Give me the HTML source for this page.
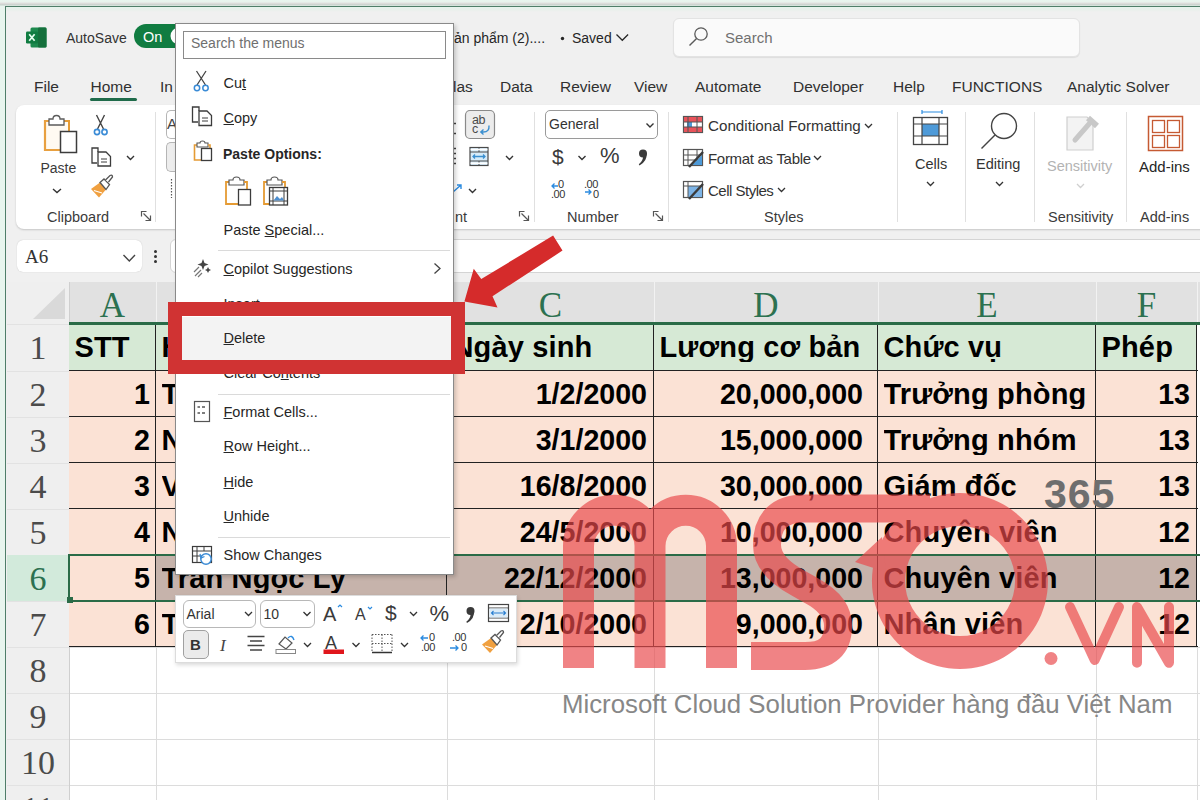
<!DOCTYPE html><html><head><meta charset="utf-8"><style>
*{margin:0;padding:0;box-sizing:border-box}
html,body{width:1200px;height:800px;overflow:hidden;background:#f0f0f0;font-family:"Liberation Sans",sans-serif;color:#242424}
.a{position:absolute;white-space:nowrap;line-height:1}
.t{font-size:15px;color:#262626}
.cell{position:absolute;font-weight:bold;font-size:28.6px;color:#000;line-height:1;white-space:nowrap}
.hdr{position:absolute;font-family:"Liberation Serif",serif;font-size:35px;line-height:1;color:#2c7150;text-align:center}
.rn{position:absolute;font-family:"Liberation Serif",serif;font-size:34px;line-height:1;color:#4b4b4b;text-align:center}
svg{position:absolute;overflow:visible}
</style></head><body>
<div class="a" style="left:0px;top:0px;width:1200px;height:800px;background:linear-gradient(#e8f5ee 0px,#e8f2ec 2px,#dcdcda 3.5px,#c5d0ca 5px,#e8f5ee 6px)"></div>
<div class="a" style="left:5px;top:6px;width:1195px;height:794px;background:linear-gradient(#e6f3ec 0px,#eaf0ec 3px,#f0f0f0 5px);border-left:1.5px solid #4f7e69;border-top:1.5px solid #4f7e69"></div>
<svg style="left:26px;top:27px" width="21" height="21" viewBox="0 0 21 21">
<rect x="4.5" y="0.5" width="16" height="20" rx="1.5" fill="#1d8a4e"/>
<rect x="12" y="0.5" width="8.5" height="20" rx="1.2" fill="#15703c"/>
<rect x="0" y="4.5" width="12" height="12" rx="1.2" fill="#107c41"/>
<path d="M3.2 7.2 L8.6 13.8 M8.6 7.2 L3.2 13.8" stroke="#e8fff0" stroke-width="1.7"/>
</svg>
<div class="a" style="left:66px;top:31px;font-size:14px;color:#333">AutoSave</div>
<div class="a" style="left:134px;top:24px;width:66px;height:24px;background:#107c41;border-radius:12px"></div>
<div class="a" style="left:143px;top:30px;font-size:14.5px;color:#fff">On</div>
<svg style="left:0;top:0" width="1" height="1"><circle cx="179" cy="36" r="8.5" fill="#fff"/></svg>
<div class="a" style="left:454px;top:31px;font-size:14px;color:#262626">ản phẩm (2)....</div>
<svg style="left:0;top:0" width="1" height="1"><circle cx="562.5" cy="38.5" r="1.7" fill="#262626"/><path d="M616.5 34.5 L622.3 40.3 L628.1 34.5" fill="none" stroke="#262626" stroke-width="1.3"/></svg>
<div class="a" style="left:572px;top:31px;font-size:14px;color:#262626">Saved</div>
<div class="a" style="left:673px;top:18px;width:407px;height:39px;background:#fafafa;border:1px solid #e3e3e3;border-radius:6px;box-shadow:0 1px 1px rgba(0,0,0,0.08)"></div>
<svg style="left:0;top:0" width="1" height="1"><circle cx="701" cy="34" r="6.2" fill="none" stroke="#5a5a5a" stroke-width="1.3"/><path d="M696.6 38.4 L689.5 45.5" stroke="#5a5a5a" stroke-width="1.4"/></svg>
<div class="a" style="left:725px;top:30px;font-size:15px;color:#707070">Search</div>
<div class="a" style="left:34px;top:79px;font-size:15.5px;color:#303030">File</div>
<div class="a" style="left:90.5px;top:79px;font-size:15.5px;color:#303030">Home</div>
<div class="a" style="left:160px;top:79px;font-size:15.5px;color:#303030">In</div>
<div class="a" style="left:453px;top:79px;font-size:15.5px;color:#303030">las</div>
<div class="a" style="left:500px;top:79px;font-size:15.5px;color:#303030">Data</div>
<div class="a" style="left:560px;top:79px;font-size:15.5px;color:#303030">Review</div>
<div class="a" style="left:634px;top:79px;font-size:15.5px;color:#303030">View</div>
<div class="a" style="left:695px;top:79px;font-size:15.5px;color:#303030">Automate</div>
<div class="a" style="left:793px;top:79px;font-size:15.5px;color:#303030">Developer</div>
<div class="a" style="left:893px;top:79px;font-size:15.5px;color:#303030">Help</div>
<div class="a" style="left:952px;top:79px;font-size:15.5px;color:#303030">FUNCTIONS</div>
<div class="a" style="left:1067px;top:79px;font-size:15.5px;color:#303030">Analytic Solver</div>
<div class="a" style="left:89.5px;top:98.3px;width:47.5px;height:2.6px;background:#1f6b4a;border-radius:2px"></div>
<div class="a" style="left:16px;top:105px;width:1200px;height:124px;background:#fff;border-radius:8px;box-shadow:0 1px 2px rgba(0,0,0,0.18)"></div>
<svg style="left:0;top:0" width="1" height="1">
<path d="M46 121 H68 V131 H60 V150 H46 Z" fill="#fffaf2"/><path d="M49 121 H45 V150 H60" fill="none" stroke="#e8a040" stroke-width="2.2"/>
<path d="M64 121 H69 V131" fill="none" stroke="#e59b34" stroke-width="2"/>
<path d="M49 125 V119 H53 Q53 115.5 56.5 115.5 Q60 115.5 60 119 H64 V125 Z" fill="#fff" stroke="#5b5b5b" stroke-width="1.3"/>
<rect x="60.5" y="131.5" width="16" height="21" fill="#fff" stroke="#3c3c3c" stroke-width="1.5"/>
<path d="M53 189 L57 192.5 L61 189" fill="none" stroke="#333" stroke-width="1.4"/>
<path d="M96.5 115 L103.5 129 M104.5 115 L97.5 129" stroke="#444" stroke-width="1.4"/>
<circle cx="97" cy="132" r="2.6" fill="none" stroke="#3a8bd6" stroke-width="1.6"/>
<circle cx="104.5" cy="132" r="2.6" fill="none" stroke="#3a8bd6" stroke-width="1.6"/>
<path d="M98 152 V148 H92 V163 H97" fill="none" stroke="#3c3c3c" stroke-width="1.3"/>
<path d="M98 152 H106 L110.5 156.5 V166 H98 Z" fill="#fff" stroke="#3c3c3c" stroke-width="1.3"/>
<path d="M101 159 H107 M101 162 H107" stroke="#3c3c3c" stroke-width="1"/>
<path d="M127 156 L130.5 159.5 L134 156" fill="none" stroke="#333" stroke-width="1.4"/>
<path d="M91.0 189.0 L100.0 182.5 L106.0 189.5 L99.0 197.5 Z" fill="#f0a040"/><path d="M94.0 190.5 L102.0 193.0" stroke="#fff" stroke-width="1.2"/><path d="M100.0 182.5 L104.0 179.0 L109.5 184.5 L106.0 189.5 Z" fill="#fff" stroke="#555" stroke-width="1.3"/><path d="M105.5 180.0 L110.0 175.5 Q112.5 174.5 112.5 177.0 L108.5 182.0" fill="#fff" stroke="#555" stroke-width="1.3"/>
<path d="M146.5 211.5 H141.5 V216.5 M143.5 213.5 L150.5 220.5 M145.5 220.5 H150.5 V215.5" fill="none" stroke="#555" stroke-width="1.2"/>
</svg>
<div class="a" style="left:40.5px;top:161px;font-size:14.5px;color:#3a3a3a;font-size:14px">Paste</div>
<div class="a" style="left:47px;top:210px;font-size:14.5px;color:#3a3a3a">Clipboard</div>
<div class="a" style="left:155px;top:112px;width:1px;height:110px;background:#e0e0e0"></div>
<div class="a" style="left:166px;top:110px;width:14px;height:29px;border:1px solid #b5b5b5;border-right:none;border-radius:5px 0 0 5px;background:#fff"></div>
<div class="a" style="left:166px;top:142px;width:14px;height:30px;border:1px solid #b5b5b5;border-right:none;border-radius:5px 0 0 5px;background:#ededed"></div>
<div class="a" style="left:167px;top:116px;font-size:15px;color:#444">A</div>
<svg style="left:0;top:0" width="1" height="1"><path d="M171.5 179 V198" stroke="#555" stroke-width="1.2" stroke-dasharray="1.5 1.5"/></svg>
<svg style="left:0;top:0" width="1" height="1">
<path d="M453 123.5 H456 M453 133.5 H456 M453 148.5 H456 M453 153.5 H456 M453 158.5 H456 M453 163.5 H456" stroke="#444" stroke-width="1.3"/>
<rect x="465.5" y="110.5" width="29" height="28" rx="4.5" fill="#ececec" stroke="#8a8a8a" stroke-width="1.2"/>
<rect x="470" y="147.5" width="18" height="18" fill="#d6ecfa" stroke="#4a4a4a" stroke-width="1.2"/>
<path d="M470 152 H488 M470 161 H488 M479 147.5 V152 M479 161 V165.5" stroke="#4a4a4a" stroke-width="1"/>
<path d="M470.6 149.5 H487.4 M470.6 163.3 H487.4" stroke="#fff" stroke-width="1.5"/>
<path d="M473 156.5 H485 M475 154.5 L473 156.5 L475 158.5 M483 154.5 L485 156.5 L483 158.5" fill="none" stroke="#3a8fd0" stroke-width="1.3"/>
<path d="M506 156 L509.5 159.5 L513 156" fill="none" stroke="#333" stroke-width="1.4"/>
<path d="M453 192 L461 185 M457 185 H461 V189" fill="none" stroke="#2b8be0" stroke-width="1.4"/>
<path d="M469 189 L472.5 192.5 L476 189" fill="none" stroke="#333" stroke-width="1.4"/>
<path d="M524.5 211.5 H519.5 V216.5 M521.5 213.5 L528.5 220.5 M523.5 220.5 H528.5 V215.5" fill="none" stroke="#555" stroke-width="1.2"/>
</svg>
<div class="a" style="left:472px;top:114px;font-size:12.5px;color:#4a4a4a;letter-spacing:-0.5px">ab</div>
<div class="a" style="left:472px;top:122.5px;font-size:12.5px;color:#4a4a4a">c</div>
<svg style="left:0;top:0" width="1" height="1"><path d="M489 125.5 Q489.5 132 483.5 132 H481 M483.5 129.5 L480.8 132 L483.5 134.5" fill="none" stroke="#3a8fd0" stroke-width="1.4"/></svg>
<div class="a" style="left:455px;top:210px;font-size:14.5px;color:#3a3a3a">nt</div>
<div class="a" style="left:534px;top:112px;width:1px;height:110px;background:#e0e0e0"></div>
<div class="a" style="left:545px;top:110px;width:113px;height:29px;background:#fff;border:1px solid #9a9a9a;border-radius:5px"></div>
<div class="a" style="left:549px;top:117px;font-size:14px;color:#333">General</div>
<svg style="left:0;top:0" width="1" height="1">
<path d="M646.5 123.5 L650 127 L653.5 123.5" fill="none" stroke="#333" stroke-width="1.4"/>
<path d="M578.5 156 L582 159.5 L585.5 156" fill="none" stroke="#333" stroke-width="1.4"/>
<path d="M658.5 211.5 H653.5 V216.5 M655.5 213.5 L662.5 220.5 M657.5 220.5 H662.5 V215.5" fill="none" stroke="#555" stroke-width="1.2"/>
<path d="M558 186 H552 M554.5 183.5 L552 186 L554.5 188.5" fill="none" stroke="#2b8be0" stroke-width="1.3"/>
<path d="M585 192 H591 M588.5 189.5 L591 192 L588.5 194.5" fill="none" stroke="#2b8be0" stroke-width="1.3"/>
</svg>
<div class="a" style="left:552px;top:146px;font-size:21px;color:#3a3a3a">$</div>
<div class="a" style="left:600px;top:145px;font-size:22px;color:#3a3a3a">%</div>
<svg style="left:0;top:0" width="1" height="1"><circle cx="643" cy="153.5" r="4" fill="#3a3a3a"/><path d="M646.5 153 Q647.5 161 639.5 165.5 L638.8 164.3 Q643.5 160.5 643 156 Z" fill="#3a3a3a"/></svg>
<div class="a" style="left:558px;top:179px;font-size:11px;color:#333">0</div>
<div class="a" style="left:551px;top:189px;font-size:11px;color:#333;letter-spacing:-0.5px">.00</div>
<div class="a" style="left:584px;top:179px;font-size:11px;color:#333;letter-spacing:-0.5px">.00</div>
<div class="a" style="left:593px;top:189px;font-size:11px;color:#333">0</div>
<div class="a" style="left:567px;top:210px;font-size:14.5px;color:#3a3a3a">Number</div>
<div class="a" style="left:668px;top:112px;width:1px;height:110px;background:#e0e0e0"></div>
<svg style="left:0;top:0" width="1" height="1">
<rect x="683.5" y="116.5" width="19" height="16" fill="#fff" stroke="#555" stroke-width="1.2"/>
<rect x="684" y="117" width="18" height="5" fill="#e8535a"/>
<rect x="684" y="127" width="18" height="5" fill="#e8535a"/>
<rect x="687" y="122" width="5" height="5" fill="#4e9ad8"/>
<path d="M683.5 122 H702.5 M683.5 127 H702.5 M688 116.5 V132.5 M697 116.5 V132.5" stroke="#555" stroke-width="1"/>
<path d="M865 124 L868.5 127.5 L872 124" fill="none" stroke="#333" stroke-width="1.3"/>
<rect x="683.5" y="149.5" width="19" height="16" fill="#fff" stroke="#555" stroke-width="1.2"/>
<path d="M683.5 155 H702.5 M683.5 160 H702.5 M688 149.5 V165.5 M697 149.5 V165.5" stroke="#555" stroke-width="1"/>
<path d="M692 165 L702 155 V165 Z" fill="#4e9ad8"/>
<path d="M689 167 L703 152" stroke="#3a3a3a" stroke-width="2.5"/>
<path d="M814 156 L817.5 159.5 L821 156" fill="none" stroke="#333" stroke-width="1.3"/>
<rect x="683.5" y="181.5" width="19" height="16" fill="#fff" stroke="#555" stroke-width="1.2"/>
<rect x="688" y="186" width="14" height="11" fill="#7db4e6"/>
<path d="M683.5 186 H702.5 M688 181.5 V197.5" stroke="#555" stroke-width="1"/>
<path d="M689 199 L703 184" stroke="#3a3a3a" stroke-width="2.5"/>
<path d="M778 188 L781.5 191.5 L785 188" fill="none" stroke="#333" stroke-width="1.3"/>
</svg>
<div class="a" style="left:708px;top:117.5px;font-size:15.2px;color:#333">Conditional Formatting</div>
<div class="a" style="left:708px;top:150.5px;font-size:15px;color:#333;letter-spacing:-0.3px">Format as Table</div>
<div class="a" style="left:708px;top:182.5px;font-size:15px;color:#333;letter-spacing:-0.5px">Cell Styles</div>
<div class="a" style="left:764px;top:210px;font-size:14.5px;color:#3a3a3a">Styles</div>
<div class="a" style="left:897px;top:112px;width:1px;height:110px;background:#e0e0e0"></div>
<svg style="left:0;top:0" width="1" height="1">
<path d="M922 112 H942 M922 110 V114 M942 110 V114" stroke="#2b8be0" stroke-width="1.2"/>
<rect x="913.5" y="117.5" width="34" height="27" fill="#fff" stroke="#444" stroke-width="1.3"/>
<rect x="922" y="124" width="17" height="12" fill="#4e9ad8"/>
<path d="M913.5 124 H947.5 M913.5 136 H947.5 M922 117.5 V144.5 M939 117.5 V144.5" stroke="#444" stroke-width="1.2"/>
<path d="M927 182 L930.5 185.5 L934 182" fill="none" stroke="#333" stroke-width="1.3"/>
</svg>
<div class="a" style="left:915px;top:157px;font-size:14.5px;color:#333">Cells</div>
<div class="a" style="left:965px;top:112px;width:1px;height:110px;background:#e0e0e0"></div>
<svg style="left:0;top:0" width="1" height="1">
<circle cx="1004" cy="126" r="12.5" fill="#fff" stroke="#444" stroke-width="1.4"/>
<path d="M995 135 L981.5 148.5" stroke="#444" stroke-width="1.5"/>
<path d="M996 182 L999.5 185.5 L1003 182" fill="none" stroke="#333" stroke-width="1.3"/>
</svg>
<div class="a" style="left:976px;top:157px;font-size:14.5px;color:#333">Editing</div>
<div class="a" style="left:1034px;top:112px;width:1px;height:110px;background:#e0e0e0"></div>
<svg style="left:0;top:0" width="1" height="1">
<path d="M1067 117 H1087 L1093 123 V150 H1067 Z" fill="#f3f3f3" stroke="#cfcfcf" stroke-width="1.2"/>
<path d="M1075 140 L1089 124" stroke="#c8c8c8" stroke-width="5" stroke-linecap="round"/>
<path d="M1088 118 L1097 126" stroke="#c8c8c8" stroke-width="6"/>
<path d="M1077 184 L1080.5 187.5 L1084 184" fill="none" stroke="#cfcfcf" stroke-width="1.3"/>
</svg>
<div class="a" style="left:1047px;top:159px;font-size:14.5px;color:#b3b3b3">Sensitivity</div>
<div class="a" style="left:1048px;top:210px;font-size:14.5px;color:#3a3a3a">Sensitivity</div>
<div class="a" style="left:1126px;top:112px;width:1px;height:110px;background:#e0e0e0"></div>
<svg style="left:0;top:0" width="1" height="1">
<rect x="1148.5" y="116.5" width="34" height="34" fill="#fff" stroke="#c55a33" stroke-width="1.5"/>
<rect x="1152.5" y="120.5" width="12" height="12" fill="none" stroke="#c55a33" stroke-width="1.3"/>
<rect x="1167.5" y="120.5" width="12" height="12" fill="none" stroke="#c55a33" stroke-width="1.3"/>
<rect x="1152.5" y="135.5" width="12" height="12" fill="none" stroke="#c55a33" stroke-width="1.3"/>
<rect x="1167.5" y="135.5" width="12" height="12" fill="none" stroke="#c55a33" stroke-width="1.3"/>
</svg>
<div class="a" style="left:1139px;top:159px;font-size:15px;color:#262626">Add-ins</div>
<div class="a" style="left:1140px;top:210px;font-size:14.5px;color:#3a3a3a">Add-ins</div>
<div class="a" style="left:17px;top:240px;width:125px;height:32px;background:#fff;border-radius:6px;box-shadow:0 0 1px rgba(0,0,0,0.25)"></div>
<div class="a" style="left:25px;top:247px;font-family:'Liberation Serif',serif;font-size:19px;color:#333">A6</div>
<svg style="left:0;top:0" width="1" height="1"><path d="M123.5 255 L129.3 261 L135 255" fill="none" stroke="#444" stroke-width="1.4"/><circle cx="155.5" cy="251.5" r="1.5" fill="#333"/><circle cx="155.5" cy="256.5" r="1.5" fill="#333"/><circle cx="155.5" cy="261.5" r="1.5" fill="#333"/></svg>
<div class="a" style="left:170px;top:239px;width:1040px;height:34px;background:#fff;border:1px solid #d4d4d4;border-radius:6px 0 0 6px"></div>
<div class="a" style="left:7px;top:282px;width:1193px;height:518px;background:#ffffff"></div>
<div class="a" style="left:7px;top:282px;width:62px;height:518px;background:#efefef"></div>
<div class="a" style="left:69px;top:282px;width:1131px;height:42px;background:#e1e1e1"></div>
<div class="a" style="left:7px;top:282px;width:62px;height:42px;background:#efefef"></div>
<svg style="left:0;top:0" width="1200" height="800"><polygon points="65,288 65,319 33,319" fill="#d9d9d9"/></svg>
<div class="a" style="left:156px;top:282px;width:1px;height:42px;background:#f2f2f2"></div>
<div class="a" style="left:447px;top:282px;width:1px;height:42px;background:#f2f2f2"></div>
<div class="a" style="left:654px;top:282px;width:1px;height:42px;background:#f2f2f2"></div>
<div class="a" style="left:878px;top:282px;width:1px;height:42px;background:#f2f2f2"></div>
<div class="a" style="left:1096px;top:282px;width:1px;height:42px;background:#f2f2f2"></div>
<div class="a" style="left:1197px;top:282px;width:1px;height:42px;background:#f2f2f2"></div>
<div class="a" style="left:69px;top:647px;width:1131px;height:1px;background:#dcdcdc"></div>
<div class="a" style="left:69px;top:693px;width:1131px;height:1px;background:#dcdcdc"></div>
<div class="a" style="left:69px;top:739px;width:1131px;height:1px;background:#dcdcdc"></div>
<div class="a" style="left:69px;top:785px;width:1131px;height:1px;background:#dcdcdc"></div>
<div class="a" style="left:156px;top:647px;width:1px;height:153px;background:#dcdcdc"></div>
<div class="a" style="left:447px;top:647px;width:1px;height:153px;background:#dcdcdc"></div>
<div class="a" style="left:654px;top:647px;width:1px;height:153px;background:#dcdcdc"></div>
<div class="a" style="left:878px;top:647px;width:1px;height:153px;background:#dcdcdc"></div>
<div class="a" style="left:1096px;top:647px;width:1px;height:153px;background:#dcdcdc"></div>
<div class="a" style="left:1197px;top:647px;width:1px;height:153px;background:#dcdcdc"></div>
<div class="a" style="left:7px;top:324px;width:62px;height:1px;background:#e2e2e2"></div>
<div class="a" style="left:7px;top:371px;width:62px;height:1px;background:#e2e2e2"></div>
<div class="a" style="left:7px;top:417px;width:62px;height:1px;background:#e2e2e2"></div>
<div class="a" style="left:7px;top:463px;width:62px;height:1px;background:#e2e2e2"></div>
<div class="a" style="left:7px;top:509px;width:62px;height:1px;background:#e2e2e2"></div>
<div class="a" style="left:7px;top:555px;width:62px;height:1px;background:#e2e2e2"></div>
<div class="a" style="left:7px;top:601px;width:62px;height:1px;background:#e2e2e2"></div>
<div class="a" style="left:7px;top:647px;width:62px;height:1px;background:#e2e2e2"></div>
<div class="a" style="left:7px;top:693px;width:62px;height:1px;background:#e2e2e2"></div>
<div class="a" style="left:7px;top:739px;width:62px;height:1px;background:#e2e2e2"></div>
<div class="a" style="left:7px;top:785px;width:62px;height:1px;background:#e2e2e2"></div>
<div class="a" style="left:68.5px;top:282px;width:1px;height:518px;background:#cfcfcf"></div>
<div class="a" style="left:7px;top:555px;width:62px;height:46px;background:#d2eadb"></div>
<div class="a" style="left:69px;top:324px;width:1128px;height:47px;background:#d6e9d5"></div>
<div class="a" style="left:69px;top:371px;width:1128px;height:276px;background:#fbe2d5"></div>
<div class="a" style="left:156px;top:555px;width:1041px;height:46px;background:#c6b3ab"></div>
<div class="a" style="left:69px;top:370px;width:1129px;height:1.3px;background:#222"></div>
<div class="a" style="left:69px;top:416px;width:1129px;height:1.3px;background:#222"></div>
<div class="a" style="left:69px;top:462px;width:1129px;height:1.3px;background:#222"></div>
<div class="a" style="left:69px;top:508px;width:1129px;height:1.3px;background:#222"></div>
<div class="a" style="left:69px;top:554px;width:1129px;height:1.3px;background:#222"></div>
<div class="a" style="left:69px;top:600px;width:1129px;height:1.3px;background:#222"></div>
<div class="a" style="left:69px;top:646px;width:1129px;height:1.3px;background:#222"></div>
<div class="a" style="left:155px;top:324px;width:1.3px;height:323px;background:#222"></div>
<div class="a" style="left:446px;top:324px;width:1.3px;height:323px;background:#222"></div>
<div class="a" style="left:653px;top:324px;width:1.3px;height:323px;background:#222"></div>
<div class="a" style="left:877px;top:324px;width:1.3px;height:323px;background:#222"></div>
<div class="a" style="left:1095px;top:324px;width:1.3px;height:323px;background:#222"></div>
<div class="a" style="left:1196px;top:324px;width:1.3px;height:323px;background:#222"></div>
<div class="a" style="left:69px;top:322px;width:1131px;height:3px;background:#2a6b47"></div>
<div class="a" style="left:69px;top:554px;width:1131px;height:2px;background:#2a6b47"></div>
<div class="a" style="left:69px;top:600px;width:1131px;height:2px;background:#2a6b47"></div>
<div class="a" style="left:68px;top:554px;width:2px;height:48px;background:#2a6b47"></div>
<div class="a" style="left:67px;top:597px;width:6px;height:6px;background:#2a6b47"></div>
<div class="hdr" style="left:69px;top:288px;width:87px">A</div>
<div class="hdr" style="left:156px;top:288px;width:291px">B</div>
<div class="hdr" style="left:447px;top:288px;width:207px">C</div>
<div class="hdr" style="left:654px;top:288px;width:224px">D</div>
<div class="hdr" style="left:878px;top:288px;width:218px">E</div>
<div class="hdr" style="left:1096px;top:288px;width:101px">F</div>
<div class="hdr" style="left:1197px;top:288px;width:103px">G</div>
<div class="rn" style="left:7px;top:331px;width:62px;color:#4b4b4b">1</div>
<div class="rn" style="left:7px;top:378px;width:62px;color:#4b4b4b">2</div>
<div class="rn" style="left:7px;top:424px;width:62px;color:#4b4b4b">3</div>
<div class="rn" style="left:7px;top:470px;width:62px;color:#4b4b4b">4</div>
<div class="rn" style="left:7px;top:516px;width:62px;color:#4b4b4b">5</div>
<div class="rn" style="left:7px;top:562px;width:62px;color:#2c7150">6</div>
<div class="rn" style="left:7px;top:608px;width:62px;color:#4b4b4b">7</div>
<div class="rn" style="left:7px;top:654px;width:62px;color:#4b4b4b">8</div>
<div class="rn" style="left:7px;top:700px;width:62px;color:#4b4b4b">9</div>
<div class="rn" style="left:7px;top:746px;width:62px;color:#4b4b4b">10</div>
<div class="rn" style="left:7px;top:792px;width:62px;color:#4b4b4b">11</div>
<div class="cell" style="left:74.5px;top:332.7px;width:81px;overflow:hidden;font-size:29px;letter-spacing:0.15px">STT</div>
<div class="cell" style="left:161.5px;top:332.7px;width:285px;overflow:hidden;font-size:29px;letter-spacing:0.15px">Họ và tên</div>
<div class="cell" style="left:452.5px;top:332.7px;width:201px;overflow:hidden;font-size:29px;letter-spacing:0.15px">Ngày sinh</div>
<div class="cell" style="left:659.5px;top:332.7px;width:218px;overflow:hidden;font-size:29px;letter-spacing:0.15px">Lương cơ bản</div>
<div class="cell" style="left:883.5px;top:332.7px;width:212px;overflow:hidden;font-size:29px;letter-spacing:0.15px">Chức vụ</div>
<div class="cell" style="left:1101.5px;top:332.7px;width:95px;overflow:hidden;font-size:29px;letter-spacing:0.15px">Phép</div>
<div class="cell" style="left:69px;top:380px;width:81px;text-align:right">1</div>
<div class="cell" style="left:161.5px;top:379.7px;width:285px;overflow:hidden;font-size:29px;letter-spacing:0.15px">Trần Văn An</div>
<div class="cell" style="left:447px;top:380px;width:200px;text-align:right">1/2/2000</div>
<div class="cell" style="left:654px;top:380px;width:209px;text-align:right">20,000,000</div>
<div class="cell" style="left:883.5px;top:379.7px;width:212px;overflow:hidden;font-size:29px;letter-spacing:0.15px">Trưởng phòng</div>
<div class="cell" style="left:1096px;top:380px;width:94px;text-align:right">13</div>
<div class="cell" style="left:69px;top:426px;width:81px;text-align:right">2</div>
<div class="cell" style="left:161.5px;top:425.7px;width:285px;overflow:hidden;font-size:29px;letter-spacing:0.15px">Nguyễn Thị Hoa</div>
<div class="cell" style="left:447px;top:426px;width:200px;text-align:right">3/1/2000</div>
<div class="cell" style="left:654px;top:426px;width:209px;text-align:right">15,000,000</div>
<div class="cell" style="left:883.5px;top:425.7px;width:212px;overflow:hidden;font-size:29px;letter-spacing:0.15px">Trưởng nhóm</div>
<div class="cell" style="left:1096px;top:426px;width:94px;text-align:right">13</div>
<div class="cell" style="left:69px;top:472px;width:81px;text-align:right">3</div>
<div class="cell" style="left:161.5px;top:471.7px;width:285px;overflow:hidden;font-size:29px;letter-spacing:0.15px">Vũ Văn Nam</div>
<div class="cell" style="left:447px;top:472px;width:200px;text-align:right">16/8/2000</div>
<div class="cell" style="left:654px;top:472px;width:209px;text-align:right">30,000,000</div>
<div class="cell" style="left:883.5px;top:471.7px;width:212px;overflow:hidden;font-size:29px;letter-spacing:0.15px">Giám đốc</div>
<div class="cell" style="left:1096px;top:472px;width:94px;text-align:right">13</div>
<div class="cell" style="left:69px;top:518px;width:81px;text-align:right">4</div>
<div class="cell" style="left:161.5px;top:517.7px;width:285px;overflow:hidden;font-size:29px;letter-spacing:0.15px">Nguyễn Văn Bình</div>
<div class="cell" style="left:447px;top:518px;width:200px;text-align:right">24/5/2000</div>
<div class="cell" style="left:654px;top:518px;width:209px;text-align:right">10,000,000</div>
<div class="cell" style="left:883.5px;top:517.7px;width:212px;overflow:hidden;font-size:29px;letter-spacing:0.15px">Chuyên viên</div>
<div class="cell" style="left:1096px;top:518px;width:94px;text-align:right">12</div>
<div class="cell" style="left:69px;top:564px;width:81px;text-align:right">5</div>
<div class="cell" style="left:161.5px;top:563.7px;width:285px;overflow:hidden;font-size:29px;letter-spacing:0.15px">Trần Ngọc Ly</div>
<div class="cell" style="left:447px;top:564px;width:200px;text-align:right">22/12/2000</div>
<div class="cell" style="left:654px;top:564px;width:209px;text-align:right">13,000,000</div>
<div class="cell" style="left:883.5px;top:563.7px;width:212px;overflow:hidden;font-size:29px;letter-spacing:0.15px">Chuyên viên</div>
<div class="cell" style="left:1096px;top:564px;width:94px;text-align:right">12</div>
<div class="cell" style="left:69px;top:610px;width:81px;text-align:right">6</div>
<div class="cell" style="left:161.5px;top:609.7px;width:285px;overflow:hidden;font-size:29px;letter-spacing:0.15px">Trần Minh Tú</div>
<div class="cell" style="left:447px;top:610px;width:200px;text-align:right">2/10/2000</div>
<div class="cell" style="left:654px;top:610px;width:209px;text-align:right">9,000,000</div>
<div class="cell" style="left:883.5px;top:609.7px;width:212px;overflow:hidden;font-size:29px;letter-spacing:0.15px">Nhân viên</div>
<div class="cell" style="left:1096px;top:610px;width:94px;text-align:right">12</div>
<div class="a" style="left:174.5px;top:22.5px;width:279px;height:552.5px;background:#fff;border:1.5px solid #8a8a8a;box-shadow:2px 2px 4px rgba(0,0,0,0.18)"></div>
<div class="a" style="left:182.5px;top:30.5px;width:263.5px;height:28.5px;background:#fff;border:1px solid #8a8a8a"></div>
<div class="a" style="left:191px;top:35.5px;font-size:14px;color:#6f6f6f">Search the menus</div>
<div class="a" style="left:223.5px;top:75.7px;font-size:14.5px;color:#262626">Cu<u>t</u></div>
<div class="a" style="left:223.5px;top:111.45px;font-size:14.5px;color:#262626"><u>C</u>opy</div>
<div class="a" style="left:223.5px;top:223.2px;font-size:14.5px;color:#262626">Paste <u>S</u>pecial...</div>
<div class="a" style="left:223.5px;top:262.2px;font-size:14.5px;color:#262626"><u>C</u>opilot Suggestions</div>
<div class="a" style="left:223.5px;top:296.7px;font-size:14.5px;color:#262626"><u>I</u>nsert</div>
<div class="a" style="left:223.5px;top:331.45px;font-size:14.5px;color:#262626"><u>D</u>elete</div>
<div class="a" style="left:223.5px;top:365.7px;font-size:14.5px;color:#262626">Clear Co<u>n</u>tents</div>
<div class="a" style="left:223.5px;top:404.7px;font-size:14.5px;color:#262626"><u>F</u>ormat Cells...</div>
<div class="a" style="left:223.5px;top:439.45px;font-size:14.5px;color:#262626"><u>R</u>ow Height...</div>
<div class="a" style="left:223.5px;top:474.7px;font-size:14.5px;color:#262626"><u>H</u>ide</div>
<div class="a" style="left:223.5px;top:509.45px;font-size:14.5px;color:#262626"><u>U</u>nhide</div>
<div class="a" style="left:223.5px;top:548.2px;font-size:14.5px;color:#262626">Show Chan<u>g</u>es</div>
<div class="a" style="left:223px;top:146.9px;font-size:14px;font-weight:bold;color:#262626">Paste Options:</div>
<div class="a" style="left:217.5px;top:249.5px;width:232px;height:1px;background:#dadada"></div>
<div class="a" style="left:217.5px;top:393.5px;width:232px;height:1px;background:#dadada"></div>
<div class="a" style="left:217.5px;top:536.5px;width:232px;height:1px;background:#dadada"></div>
<svg style="left:0;top:0" width="1" height="1">
<path d="M196.5 71 L205.5 85 M206 71 L197 85" stroke="#444" stroke-width="1.3"/>
<circle cx="197" cy="88" r="2.7" fill="none" stroke="#3a8bd6" stroke-width="1.5"/>
<circle cx="205.5" cy="88" r="2.7" fill="none" stroke="#3a8bd6" stroke-width="1.5"/>
<path d="M199 111 V107 H192.5 V122 H198" fill="none" stroke="#3c3c3c" stroke-width="1.3"/>
<path d="M199 111 H207 L211.5 115.5 V125.5 H199 Z" fill="#fff" stroke="#3c3c3c" stroke-width="1.3"/>
<path d="M202 118 H208 M202 121 H208" stroke="#3c3c3c" stroke-width="1"/>
<path d="M197 145 H194.5 V160 H201" fill="none" stroke="#e59b34" stroke-width="1.6"/>
<path d="M197 147 V143 H200 Q200 141 202.5 141 Q205 141 205 143 H208 V147 Z" fill="#fff" stroke="#555" stroke-width="1.1"/>
<path d="M208 145 H210 V148" fill="none" stroke="#e59b34" stroke-width="1.6"/>
<rect x="201.5" y="148.5" width="10" height="12" fill="#fff" stroke="#3c3c3c" stroke-width="1.3"/>
<path d="M229 182 H226 V204 H238" fill="none" stroke="#e59b34" stroke-width="1.8"/>
<path d="M229 185 V180 H233 Q233 177 236.5 177 Q240 177 240 180 H244 V185 Z" fill="#fff" stroke="#555" stroke-width="1.2"/>
<path d="M244 182 H247 V190" fill="none" stroke="#e59b34" stroke-width="1.8"/>
<rect x="238.5" y="189.5" width="12" height="15.5" fill="#fff" stroke="#3c3c3c" stroke-width="1.3"/>
<path d="M267 182 H264 V204 H270" fill="none" stroke="#e59b34" stroke-width="1.8"/>
<path d="M267 185 V180 H271 Q271 177 274.5 177 Q278 177 278 180 H282 V185 Z" fill="#fff" stroke="#555" stroke-width="1.2"/>
<path d="M282 182 H285 V188" fill="none" stroke="#e59b34" stroke-width="1.8"/>
<rect x="269.5" y="187.5" width="18" height="17.5" fill="#fff" stroke="#3c3c3c" stroke-width="1.3"/>
<path d="M269.5 191 H287.5 M269.5 201 H287.5 M273 187.5 V205 M284 187.5 V205" stroke="#3c3c3c" stroke-width="1"/>
<path d="M273.5 200.5 L277 196 L280 199 L282 197 L284 200.5 Z" fill="#4e8fd0"/>
<path d="M203 259 L204.5 263 L208.5 264.5 L204.5 266 L203 270 L201.5 266 L197.5 264.5 L201.5 263 Z" fill="#444"/>
<path d="M208 267 L209 269 L211 270 L209 271 L208 273 L207 271 L205 270 L207 269 Z" fill="#444"/>
<path d="M194 272 L199 267 M195 276 L201 270 M198 277 L202 273" stroke="#777" stroke-width="1.2"/>
<path d="M434.5 263.5 L440 268.5 L434.5 273.5" fill="none" stroke="#444" stroke-width="1.3"/>
<rect x="194.5" y="401.5" width="15" height="20" fill="#fff" stroke="#555" stroke-width="1.2"/>
<path d="M197.5 407 H200 M197.5 413 H200 M202 407 H205 M202 413 H205" stroke="#555" stroke-width="1.5"/>
<rect x="192.5" y="546.5" width="19" height="16" fill="#fff" stroke="#3c3c3c" stroke-width="1.2"/>
<path d="M192.5 551 H211.5 M192.5 556 H202 M197 546.5 V562.5 M204 546.5 V551" stroke="#3c3c3c" stroke-width="1"/>
<circle cx="206" cy="559" r="5.2" fill="#fff" stroke="#3a8bd6" stroke-width="1.5"/>
<path d="M200 554 L201 558 L204.5 556.5" fill="none" stroke="#3a8bd6" stroke-width="1.3"/>
</svg>
<div class="a" style="left:175px;top:595px;width:342px;height:68px;background:#fff;border:1px solid #dcdcdc;box-shadow:1px 2px 4px rgba(0,0,0,0.15)"></div>
<div class="a" style="left:182.5px;top:599.5px;width:73.5px;height:28.5px;background:#fff;border:1px solid #b8b8b8;border-radius:6px"></div>
<div class="a" style="left:186.5px;top:607px;font-size:14px;color:#333">Arial</div>
<div class="a" style="left:259.5px;top:599.5px;width:55px;height:28.5px;background:#fff;border:1px solid #b8b8b8;border-radius:6px"></div>
<div class="a" style="left:263.5px;top:607px;font-size:14px;color:#333">10</div>
<div class="a" style="left:182.5px;top:629.5px;width:26px;height:29px;background:#ebebeb;border:1px solid #a0a0a0;border-radius:5px"></div>
<div class="a" style="left:190px;top:637px;font-size:15px;font-weight:bold;color:#333">B</div>
<div class="a" style="left:220px;top:636.5px;font-size:17px;font-style:italic;color:#444;font-family:'Liberation Serif',serif">I</div>
<div class="a" style="left:323px;top:604px;font-size:20px;color:#3a3a3a">A</div>
<div class="a" style="left:355px;top:607px;font-size:16px;color:#3a3a3a">A</div>
<div class="a" style="left:385px;top:602.4px;font-size:21px;color:#3a3a3a">$</div>
<div class="a" style="left:429.5px;top:602.6px;font-size:22px;color:#3a3a3a">%</div>
<svg style="left:0;top:0" width="1" height="1"><circle cx="470.5" cy="611" r="4" fill="#3a3a3a"/><path d="M474 610.5 Q475 618.5 467 623 L466.3 621.8 Q471 618 470.5 613.5 Z" fill="#3a3a3a"/></svg>
<div class="a" style="left:325px;top:634px;font-size:18px;color:#3a3a3a">A</div>
<div class="a" style="left:429px;top:632px;font-size:11px;color:#333">0</div>
<div class="a" style="left:421px;top:642px;font-size:11px;color:#333;letter-spacing:-0.5px">.00</div>
<div class="a" style="left:452px;top:632px;font-size:11px;color:#333;letter-spacing:-0.5px">.00</div>
<div class="a" style="left:461px;top:642px;font-size:11px;color:#333">0</div>
<svg style="left:0;top:0" width="1" height="1">
<path d="M245 612 L248.5 615.5 L252 612" fill="none" stroke="#333" stroke-width="1.3"/>
<path d="M303.5 612 L307 615.5 L310.5 612" fill="none" stroke="#333" stroke-width="1.3"/>
<path d="M338 607 L340 605 L342 607" fill="none" stroke="#2b8be0" stroke-width="1.2"/>
<path d="M368 607 L370 609 L372 607" fill="none" stroke="#2b8be0" stroke-width="1.2"/>
<path d="M410 612 L413.5 615.5 L417 612" fill="none" stroke="#333" stroke-width="1.3"/>
<rect x="488.5" y="604.5" width="20" height="17" fill="#fff" stroke="#444" stroke-width="1.2"/>
<path d="M488.5 608 H508.5 M488.5 618 H508.5" stroke="#444" stroke-width="1"/>
<rect x="489.5" y="608.5" width="18" height="9" fill="#dcecf8"/>
<path d="M491.5 613 H505.5 M493.5 611 L491.5 613 L493.5 615 M503.5 611 L505.5 613 L503.5 615" fill="none" stroke="#2b7fd0" stroke-width="1.1"/>
<path d="M247.5 636.5 H264.5 M250 641 H262 M247.5 645.5 H264.5 M250 650 H262" stroke="#444" stroke-width="1.3"/>
<path d="M279 644 L285 637 L292 643 L286 649 Z" fill="#fff" stroke="#555" stroke-width="1.2"/>
<path d="M288 638 Q292 634 294 640" fill="none" stroke="#2b8be0" stroke-width="1.4"/>
<rect x="276" y="649.5" width="19.5" height="4" fill="#fff" stroke="#888" stroke-width="1"/>
<path d="M304 643 L307.5 646.5 L311 643" fill="none" stroke="#333" stroke-width="1.3"/>
<rect x="323.5" y="649.5" width="20.5" height="4.5" fill="#e0161c"/>
<path d="M352.5 643 L356 646.5 L359.5 643" fill="none" stroke="#333" stroke-width="1.3"/>
<path d="M372 634.5 H392 M372 652.5 H392 M372 634.5 V652.5 M392 634.5 V652.5 M382 634.5 V652.5 M372 643.5 H392" stroke="#555" stroke-width="1" stroke-dasharray="1.5 1.5"/>
<path d="M372 652.5 H392" stroke="#333" stroke-width="1.5"/>
<path d="M401 643 L404.5 646.5 L408 643" fill="none" stroke="#333" stroke-width="1.3"/>
<path d="M428 638 H421 M423.5 635.5 L421 638 L423.5 640.5" fill="none" stroke="#2b8be0" stroke-width="1.3"/>
<path d="M450 648 H458 M455.5 645.5 L458 648 L455.5 650.5" fill="none" stroke="#2b8be0" stroke-width="1.3"/>
<path d="M482.0 644.5 L491.0 638.0 L497.0 645.0 L490.0 653.0 Z" fill="#f0a040"/><path d="M485.0 646.0 L493.0 648.5" stroke="#fff" stroke-width="1.2"/><path d="M491.0 638.0 L495.0 634.5 L500.5 640.0 L497.0 645.0 Z" fill="#fff" stroke="#555" stroke-width="1.3"/><path d="M496.5 635.5 L501.0 631.0 Q503.5 630.0 503.5 632.5 L499.5 637.5" fill="#fff" stroke="#555" stroke-width="1.3"/>
</svg>
<div class="a" style="left:182px;top:317px;width:268.5px;height:43px;background:#f3f3f3"></div>
<div class="a" style="left:223.5px;top:331.45px;font-size:14.5px;color:#262626"><u>D</u>elete</div>
<div class="a" style="left:168px;top:302px;width:297px;height:72px;border:14.5px solid #d03333"></div>
<svg style="left:0;top:0" width="1" height="1"><polygon points="464.4,301.5 473.75,268.75 481.25,279 553.1,235.6 562.5,250.6 492.5,296.25 497.5,307.5" fill="#d52b2b"/></svg>
<svg style="left:0;top:0" width="1200" height="800">
<g opacity="0.68">
<path fill="none" stroke="#ea4a4c" stroke-width="31" d="M578.5 668 V546 A35.75 35.75 0 0 1 650 546 V668 M650 546 A35.75 35.75 0 0 1 721.5 546 V668"/>
<path fill="#ea4a4c" fill-rule="evenodd" d="M960 493 A88 88 0 1 1 959.9 493 Z M960 526 A55 55 0 1 0 960.1 526 Z"/>
<path fill="#ea4a4c" d="M855 562 L882 537 L886 572 Z"/>
<path fill="none" stroke="#ea4a4c" stroke-width="28" d="M930 508.5 H805 Q767 508.5 767 545 Q767 566 798 583 L812 591 Q838 605 838 626 Q838 656 805 656 H751"/>
<circle cx="1051" cy="658.5" r="6.5" fill="#ea4a4c"/>
<path fill="none" stroke="#ea4a4c" stroke-width="10" stroke-linejoin="round" stroke-linecap="round" d="M1070 607 L1094.7 660 L1119 607 M1137 662.8 V607 L1169 662.8 V607"/>
</g>
</svg>
<div class="a" style="left:1044px;top:474px;font-size:41px;font-weight:bold;color:#6e6e6e;letter-spacing:1px">365</div>
<div class="a" style="left:562px;top:692px;font-size:25.8px;color:#878787">Microsoft Cloud Solution Provider hàng đầu Việt Nam</div>
</body></html>
